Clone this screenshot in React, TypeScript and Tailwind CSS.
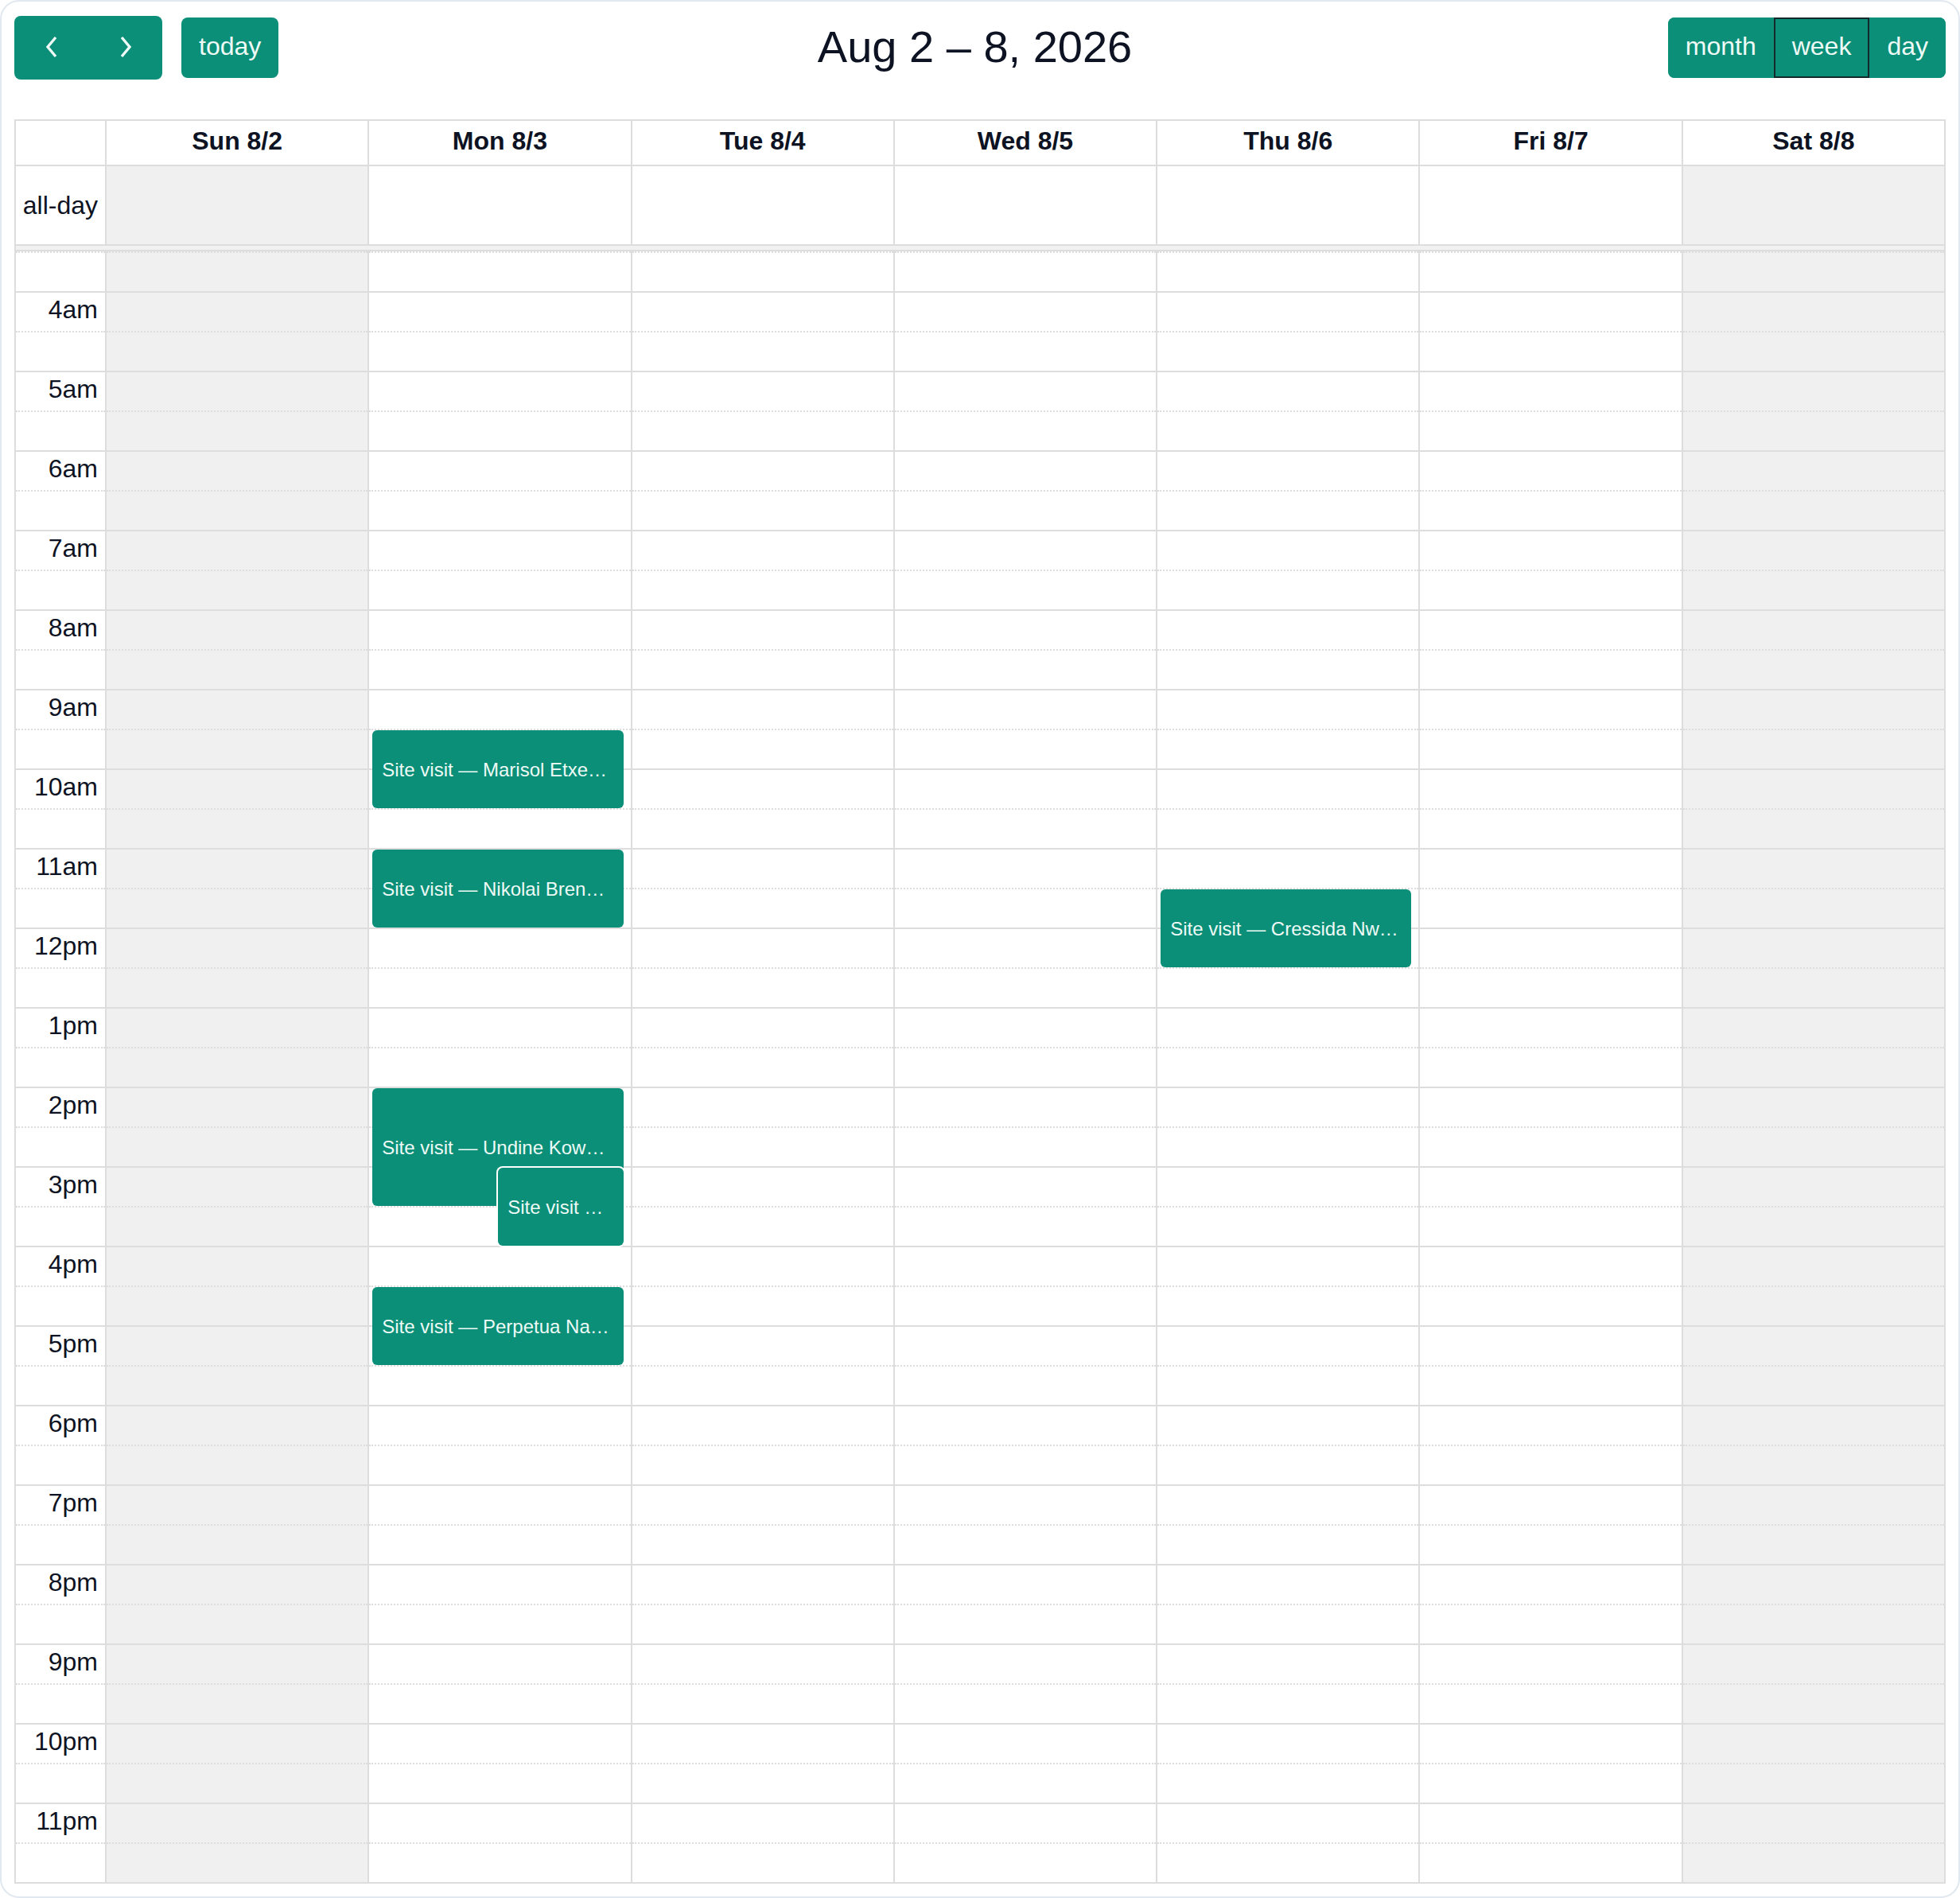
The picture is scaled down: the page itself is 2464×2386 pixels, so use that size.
import React from "react";

const days = ["Sun 8/2", "Mon 8/3", "Tue 8/4", "Wed 8/5", "Thu 8/6", "Fri 8/7", "Sat 8/8"];
const weekend = [true, false, false, false, false, false, true];

type Slot = { minor: boolean; label: string };
const slots: Slot[] = Array.from({ length: 41 }, (_, i) => {
  const minutes = 210 + i * 30;
  const h = Math.floor(minutes / 60);
  const minor = minutes % 60 !== 0;
  const hh = h % 12 === 0 ? 12 : h % 12;
  const label = minor ? "" : `${hh}${h < 12 ? "am" : "pm"}`;
  return { minor, label };
});

type Ev = { day: number; start: number; end: number; title: string; nested?: boolean };
const events: Ev[] = [
  { day: 1, start: 9.5, end: 10.5, title: "Site visit — Marisol Etxe…" },
  { day: 1, start: 11, end: 12, title: "Site visit — Nikolai Bren…" },
  { day: 1, start: 14, end: 15.5, title: "Site visit — Undine Kow…" },
  { day: 1, start: 15, end: 16, title: "Site visit …", nested: true },
  { day: 1, start: 16.5, end: 17.5, title: "Site visit — Perpetua Na…" },
  { day: 4, start: 11.5, end: 12.5, title: "Site visit — Cressida Nw…" },
];

function Chevron({ dir }: { dir: "left" | "right" }) {
  return (
    <svg width="20" height="28" viewBox="0 0 20 28" fill="none">
      <polyline
        points={dir === "left" ? "15,2 5,14 15,26" : "5,2 15,14 5,26"}
        stroke="#eefaf6"
        strokeWidth="3.4"
        strokeLinejoin="miter"
      />
    </svg>
  );
}

function EventBox({ ev }: { ev: Ev }) {
  const top = (ev.start - 3.5) * 100 + 2;
  const height = (ev.end - ev.start) * 100 - 2;
  return (
    <div
      className={
        "absolute right-[9px] flex items-center rounded-[6px] bg-[#0b8f78] px-[12px] pt-[2px] overflow-hidden " +
        (ev.nested ? "left-[162px] ring-2 ring-white z-10" : "left-[4px]")
      }
      style={{ top, height }}
    >
      <span className="whitespace-nowrap overflow-hidden text-[24px] leading-[30px] text-[#eefaf6]">{ev.title}</span>
    </div>
  );
}

export default function App() {
  return (
    <div className="h-[2386px] w-full bg-white font-['Liberation_Sans',Arial,sans-serif] text-[#0d1322]">
      <div className="h-[2386px] border-2 border-[#e2e8f0] rounded-[24px] px-[16px] pt-[18px] bg-white">
        {/* Toolbar */}
        <div className="flex items-center justify-between h-[80px] mb-[50px]">
          <div className="flex items-center">
            <div className="flex h-[80px] rounded-[8px] bg-[#0b8f78] overflow-hidden">
              <button className="w-[93px] h-full flex items-center justify-center pb-[3px]">
                <Chevron dir="left" />
              </button>
              <button className="w-[93px] h-full flex items-center justify-center pb-[3px]">
                <Chevron dir="right" />
              </button>
            </div>
            <button className="ml-[24px] h-[76px] px-[22px] pb-[4px] rounded-[8px] bg-[#0b8f78] text-[32px] text-[#eefaf6] leading-none">
              today
            </button>
          </div>
          <div className="text-[56px] leading-none text-[#0d1322] pl-[4px] pb-[2px]">Aug 2 – 8, 2026</div>
          <div className="flex h-[76px] rounded-[8px] overflow-hidden bg-[#0b8f78]">
            <button className="px-[20px] pb-[4px] border-2 border-[#0b8f78] rounded-l-[8px] text-[32px] leading-none text-[#eefaf6]">month</button>
            <button className="px-[21px] pb-[4px] border-2 border-[#13292b] text-[32px] leading-none text-[#eefaf6]">week</button>
            <button className="px-[20px] pb-[4px] border-2 border-[#0b8f78] rounded-r-[8px] text-[32px] leading-none text-[#eefaf6]">day</button>
          </div>
        </div>

        {/* Grid */}
        <div className="border-l-2 border-t-2 border-b-2 border-[#dddddd]">
          {/* Header */}
          <div className="grid grid-cols-[114px_repeat(7,1fr)]">
            <div className="h-[57px] border-r-2 border-b-2 border-[#dddddd]" />
            {days.map((d) => (
              <div
                key={d}
                className="h-[57px] border-r-2 border-b-2 border-[#dddddd] flex items-center justify-center pb-[5px] text-[32px] font-bold"
              >
                {d}
              </div>
            ))}
          </div>
          {/* All-day */}
          <div className="grid grid-cols-[114px_repeat(7,1fr)]">
            <div className="h-[100px] border-r-2 border-b-2 border-[#dddddd] flex items-center justify-end pr-[9px] text-[32px]">
              all-day
            </div>
            {days.map((d, i) => (
              <div
                key={d}
                className={
                  "h-[100px] border-r-2 border-b-2 border-[#dddddd] " + (weekend[i] ? "bg-[#f0f0f0]" : "bg-white")
                }
              />
            ))}
          </div>
          {/* Divider */}
          <div className="h-[7px] bg-[#f1f1f1] border-b-2 border-r-2 border-[#dddddd]" />
          {/* Time grid body */}
          <div className="grid grid-cols-[114px_repeat(7,1fr)]">
            <div className="flex flex-col border-r-2 border-[#dddddd]">
              {slots.map((s, i) => (
                <div
                  key={i}
                  className={
                    "h-[50px] border-t-2 border-[#dddddd] flex items-center justify-end pr-[9px] pb-[6px] text-[32px] " +
                    (s.minor ? "border-dotted" : "border-solid")
                  }
                >
                  {s.label}
                </div>
              ))}
            </div>
            {days.map((d, di) => (
              <div
                key={d}
                className={
                  "relative flex flex-col border-r-2 border-[#dddddd] " + (weekend[di] ? "bg-[#f0f0f0]" : "bg-white")
                }
              >
                {slots.map((s, i) => (
                  <div
                    key={i}
                    className={"h-[50px] border-t-2 border-[#dddddd] " + (s.minor ? "border-dotted" : "border-solid")}
                  />
                ))}
                {events
                  .filter((e) => e.day === di)
                  .map((e, k) => (
                    <EventBox key={k} ev={e} />
                  ))}
              </div>
            ))}
          </div>
        </div>
      </div>
    </div>
  );
}
